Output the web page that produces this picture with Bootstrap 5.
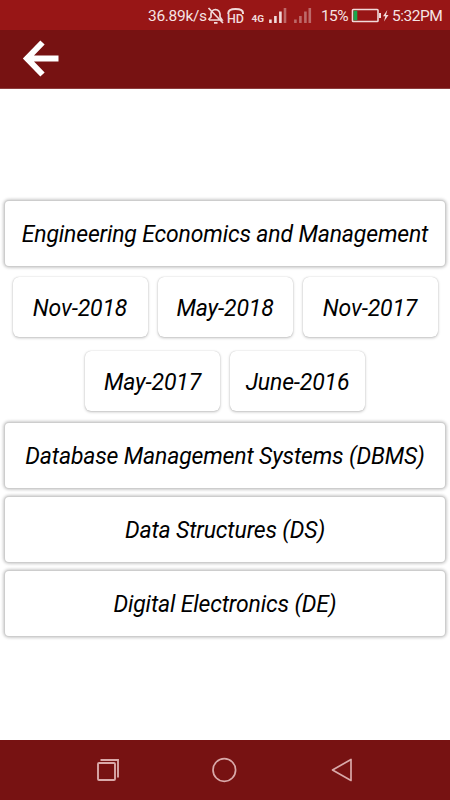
<!DOCTYPE html>
<html lang="en">
<head>
<meta charset="utf-8">
<meta name="viewport" content="width=device-width, initial-scale=1">
<title>Question papers</title>
<link href="https://cdn.jsdelivr.net/npm/bootstrap@5.3.0/dist/css/bootstrap.min.css" rel="stylesheet">
<style>
body { font-family: Roboto, "Liberation Sans", sans-serif; color: #000; overflow: hidden; }
svg { display: block; flex: none; }
.status-bar { height: 30px; background: #981616; color: #f6e4e4; font-size: 15.5px; line-height: 30px; padding: 1px 0 0 148px; }
.status-bar span { flex: none; white-space: nowrap; }
.speed { width: 59px; letter-spacing: -.3px; }
.charge { width: 29px; letter-spacing: -.6px; }
.clock { letter-spacing: -.5px; }
.app-bar { height: 59px; background: #771212; border-bottom: 1px solid #8d3d3d; padding-left: 22px; }
.nav-keys { height: 60px; background: #771212; padding: 0 96px 0 95px; }
.papers { font-size: 23px; letter-spacing: -.16px; font-style: italic; line-height: 1; padding: 8px 5px 0; }
.subject { height: 65px; border: 0; border-radius: 4px; box-shadow: 0 0 0 1px #cdcdcd, 0 0 3px 2px rgba(0,0,0,.2); color: #000; white-space: nowrap; }
.subject + .subject { margin-top: 9px; }
.terms { gap: 14px 10px; padding: 11px 0 12px; }
.term { width: 135px; height: 60px; border: 0; border-radius: 6px; box-shadow: 0 0 1px rgba(0,0,0,.22), 0 1px 3px rgba(0,0,0,.25); color: #000; }
.subject, .term { padding-top: 2px; }
</style>
<script src="https://cdn.jsdelivr.net/npm/bootstrap@5.3.0/dist/js/bootstrap.bundle.min.js"></script>
</head>
<body class="vh-100 d-flex flex-column bg-white">
<div class="status-bar d-flex align-items-center flex-shrink-0">
  <span class="speed">36.89k/s</span>
  <svg width="114" height="30" viewBox="207 0 114 30" fill="none" stroke="#f1dada" stroke-width="1.7">
    <path d="M209 19V18L211 16V12.500Q211.500 9 215.500 8.500Q219.500 9 220 13V16L222 19H209M214 21.800H217.500M208.500 7L223 22"/>
    <path d="M228.300 13V12Q228.500 8 235.500 8Q243 8 243 12V13" stroke-width="2"/>
    <text x="227" y="22" font-size="12.500" font-weight="500" textLength="17" lengthAdjust="spacingAndGlyphs" fill="#f1dada" stroke="none">HD</text>
    <text x="251.500" y="21" font-size="8.500" font-weight="700" textLength="12.500" lengthAdjust="spacingAndGlyphs" fill="#f1dada" stroke="none">4G</text>
    <path stroke-width="2.600" d="M270.400 18.500V22M275.400 15V22M280.400 10.500V22"/>
    <path stroke-width="2.600" stroke="#bd6969" d="M285 7V22M295.400 18.500V22M300.400 15V22M305.400 10.500V22M309.800 7V22"/>
  </svg>
  <span class="charge">15%</span>
  <svg width="42" height="30" viewBox="350 0 42 30">
    <rect x="352.500" y="8.500" width="25.500" height="12" rx=".8" fill="none" stroke="#f1dada" stroke-width="1.600"/>
    <path fill="#19a84b" d="M353.500 9.700H357.300V19.300H353.500Z"/>
    <path fill="#f1dada" d="M379 12H381V17H379ZM387.300 9L383 15.300H385.300L384 20.500L388.500 14H386Z"/>
  </svg>
  <span class="clock">5:32PM</span>
</div>
<nav class="app-bar d-flex align-items-center flex-shrink-0">
  <svg width="38" height="38" viewBox="22.500 40 38 38" role="img" aria-label="Back"><path d="M43 42.500L27.500 58.500L43 74.500M27 58.500H59" fill="none" stroke="#fff" stroke-width="6"/></svg>
</nav>
<main class="papers flex-grow-1 d-flex flex-column justify-content-center">
  <a class="subject card justify-content-center align-items-center text-decoration-none" href="#">Engineering Economics and Management</a>
  <div class="terms d-flex flex-wrap justify-content-center">
    <div class="term card justify-content-center align-items-center">Nov-2018</div>
    <div class="term card justify-content-center align-items-center">May-2018</div>
    <div class="term card justify-content-center align-items-center">Nov-2017</div>
    <div class="term card justify-content-center align-items-center">May-2017</div>
    <div class="term card justify-content-center align-items-center">June-2016</div>
  </div>
  <a class="subject card justify-content-center align-items-center text-decoration-none" href="#">Database Management Systems (DBMS)</a>
  <a class="subject card justify-content-center align-items-center text-decoration-none" href="#">Data Structures (DS)</a>
  <a class="subject card justify-content-center align-items-center text-decoration-none" href="#">Digital Electronics (DE)</a>
</main>
<footer class="nav-keys d-flex align-items-center justify-content-between flex-shrink-0">
  <svg width="26" height="26" viewBox="95 757 26 26" fill="none" stroke="#d9a9a9" stroke-width="1.900"><rect x="98" y="763" width="17" height="17" rx="1"/><path d="M100.500 760H118V777.500"/></svg>
  <svg width="26" height="26" viewBox="212 757 26 26" fill="none" stroke="#d9a9a9" stroke-width="1.700"><circle cx="224.300" cy="770" r="11.300"/></svg>
  <svg width="26" height="26" viewBox="328 757 26 26" fill="none" stroke="#d9a9a9" stroke-width="1.700" stroke-linejoin="round"><path d="M332.500 770L351 759.500V780.500Z"/></svg>
</footer>
</body>
</html>
